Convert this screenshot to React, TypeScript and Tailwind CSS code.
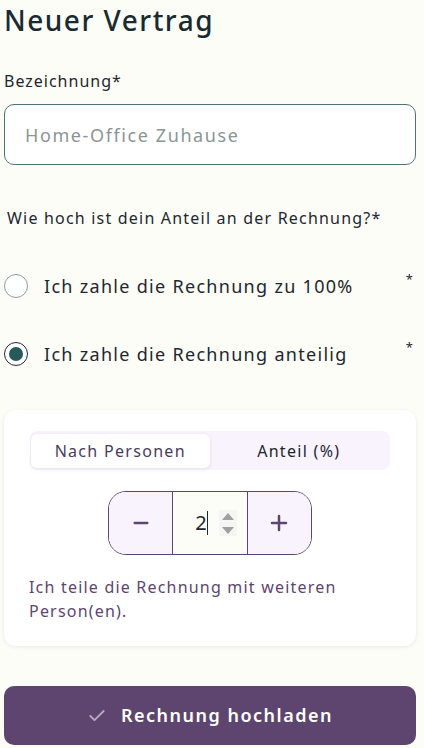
import { useState } from 'react';
import { Check, Minus, Plus } from 'lucide-react';

const font = { fontFamily: '"Noto Sans", "Open Sans", sans-serif' };

function Radio({ checked, label, onClick }: { checked: boolean; label: string; onClick: () => void }) {
  return (
    <button onClick={onClick} className="flex items-center w-full h-6 text-left">
      <span
        className={`w-[24px] h-[24px] rounded-full flex items-center justify-center bg-white shrink-0 ${
          checked ? 'border-[1.5px] border-[#1d2b33]' : 'border border-[#8d9c9f]'
        }`}
      >
        {checked && <span className="w-[14px] h-[14px] rounded-full bg-[#265a5c]" />}
      </span>
      <span className="ml-[16px] text-[18px] text-[#1d2730] tracking-[1.3px]">{label}</span>
      <span className="ml-auto mr-[3px] -mt-[12px] text-[13px] text-[#1d2730]">*</span>
    </button>
  );
}

export default function App() {
  const [mode, setMode] = useState<'full' | 'part'>('part');
  const [tab, setTab] = useState<'persons' | 'share'>('persons');
  const [count, setCount] = useState(2);

  return (
    <div style={font} className="min-h-[748px] bg-[#fdfdf7] pl-1 pr-2 text-[#1d2730]">
      <h1 className="text-[28px] leading-[40px] font-medium tracking-[1.5px] text-[#1a2a31]">Neuer Vertrag</h1>

      <label className="block mt-[29px] text-[16px] leading-6 tracking-[1px]">Bezeichnung*</label>
      <input
        placeholder="Home-Office Zuhause"
        className="mt-[11px] w-full h-[61px] rounded-[10px] border border-[#4d7279] bg-white px-5 text-[18px] tracking-[1.6px] placeholder:text-[#8b9595] outline-none"
      />

      <p className="mt-[41px] ml-[3px] text-[16px] leading-6 tracking-[1.2px]">Wie hoch ist dein Anteil an der Rechnung?*</p>

      <div className="mt-[44px] flex flex-col gap-[44px]">
        <Radio checked={mode === 'full'} label="Ich zahle die Rechnung zu 100%" onClick={() => setMode('full')} />
        <Radio checked={mode === 'part'} label="Ich zahle die Rechnung anteilig" onClick={() => setMode('part')} />
      </div>

      <div className="mt-[44px] rounded-xl bg-white shadow-[0_1px_4px_rgba(0,0,0,0.08)] pt-[21px] pb-[23px] px-[25px]">
        <div className="mx-[1px] grid grid-cols-2 h-[39px] rounded-lg bg-[#f8f3fd] pl-[1px] pr-[2px] pt-[3px] pb-[2px]">
          <button
            onClick={() => setTab('persons')}
            className={`rounded-md text-[16px] tracking-[1.3px] ${
              tab === 'persons' ? 'bg-white text-[#4a3a60] shadow-[0_1px_4px_rgba(90,60,120,0.12)]' : 'text-[#1d2730]'
            }`}
          >
            Nach Personen
          </button>
          <button
            onClick={() => setTab('share')}
            className={`rounded-md text-[16px] tracking-[1.3px] ${
              tab === 'share' ? 'bg-white text-[#4a3a60] shadow-[0_1px_4px_rgba(90,60,120,0.12)]' : 'text-[#1d2730]'
            }`}
          >
            Anteil (%)
          </button>
        </div>

        <div className="mt-[21px] mx-auto w-[204px] h-[64px] flex rounded-[18px] border border-[#5d4572] overflow-hidden">
          <button
            onClick={() => setCount(Math.max(1, count - 1))}
            className="w-[64px] flex items-center justify-center bg-[#f8f3fd] text-[#5d4572]"
          >
            <Minus size={22} strokeWidth={2.5} />
          </button>
          <div className="w-[76px] flex items-center border-x border-[#5d4572] bg-[#fdfdf7]">
            <span className="ml-[22px] text-[20px] text-[#1d2730]">{count}</span>
            <span className="w-px h-[24px] bg-[#1d2730]" />
            <span className="ml-[11px] w-[18px] h-[26px] bg-[#f5f5f2] flex flex-col items-center justify-center gap-[7px]">
              <svg width="12" height="7" viewBox="0 0 12 7"><path d="M6 0L12 7H0z" fill="#a0a0a0" /></svg>
              <svg width="12" height="7" viewBox="0 0 12 7"><path d="M0 0H12L6 7z" fill="#a0a0a0" /></svg>
            </span>
          </div>
          <button
            onClick={() => setCount(count + 1)}
            className="w-[64px] flex items-center justify-center bg-[#f8f3fd] text-[#5d4572]"
          >
            <Plus size={24} strokeWidth={2.5} />
          </button>
        </div>

        <p className="mt-[20px] text-[16px] leading-6 tracking-[1.2px] text-[#5d4572]">
          Ich teile die Rechnung mit weiteren
          <br />
          Person(en).
        </p>
      </div>

      <button className="mt-[40px] w-full h-[59px] rounded-[10px] bg-[#5d4570] flex items-center justify-center gap-[14px] text-white text-[18px] font-semibold tracking-[1.5px]">
        <Check size={20} strokeWidth={2.2} className="text-[#b5abc0]" />
        Rechnung hochladen
      </button>
    </div>
  );
}
